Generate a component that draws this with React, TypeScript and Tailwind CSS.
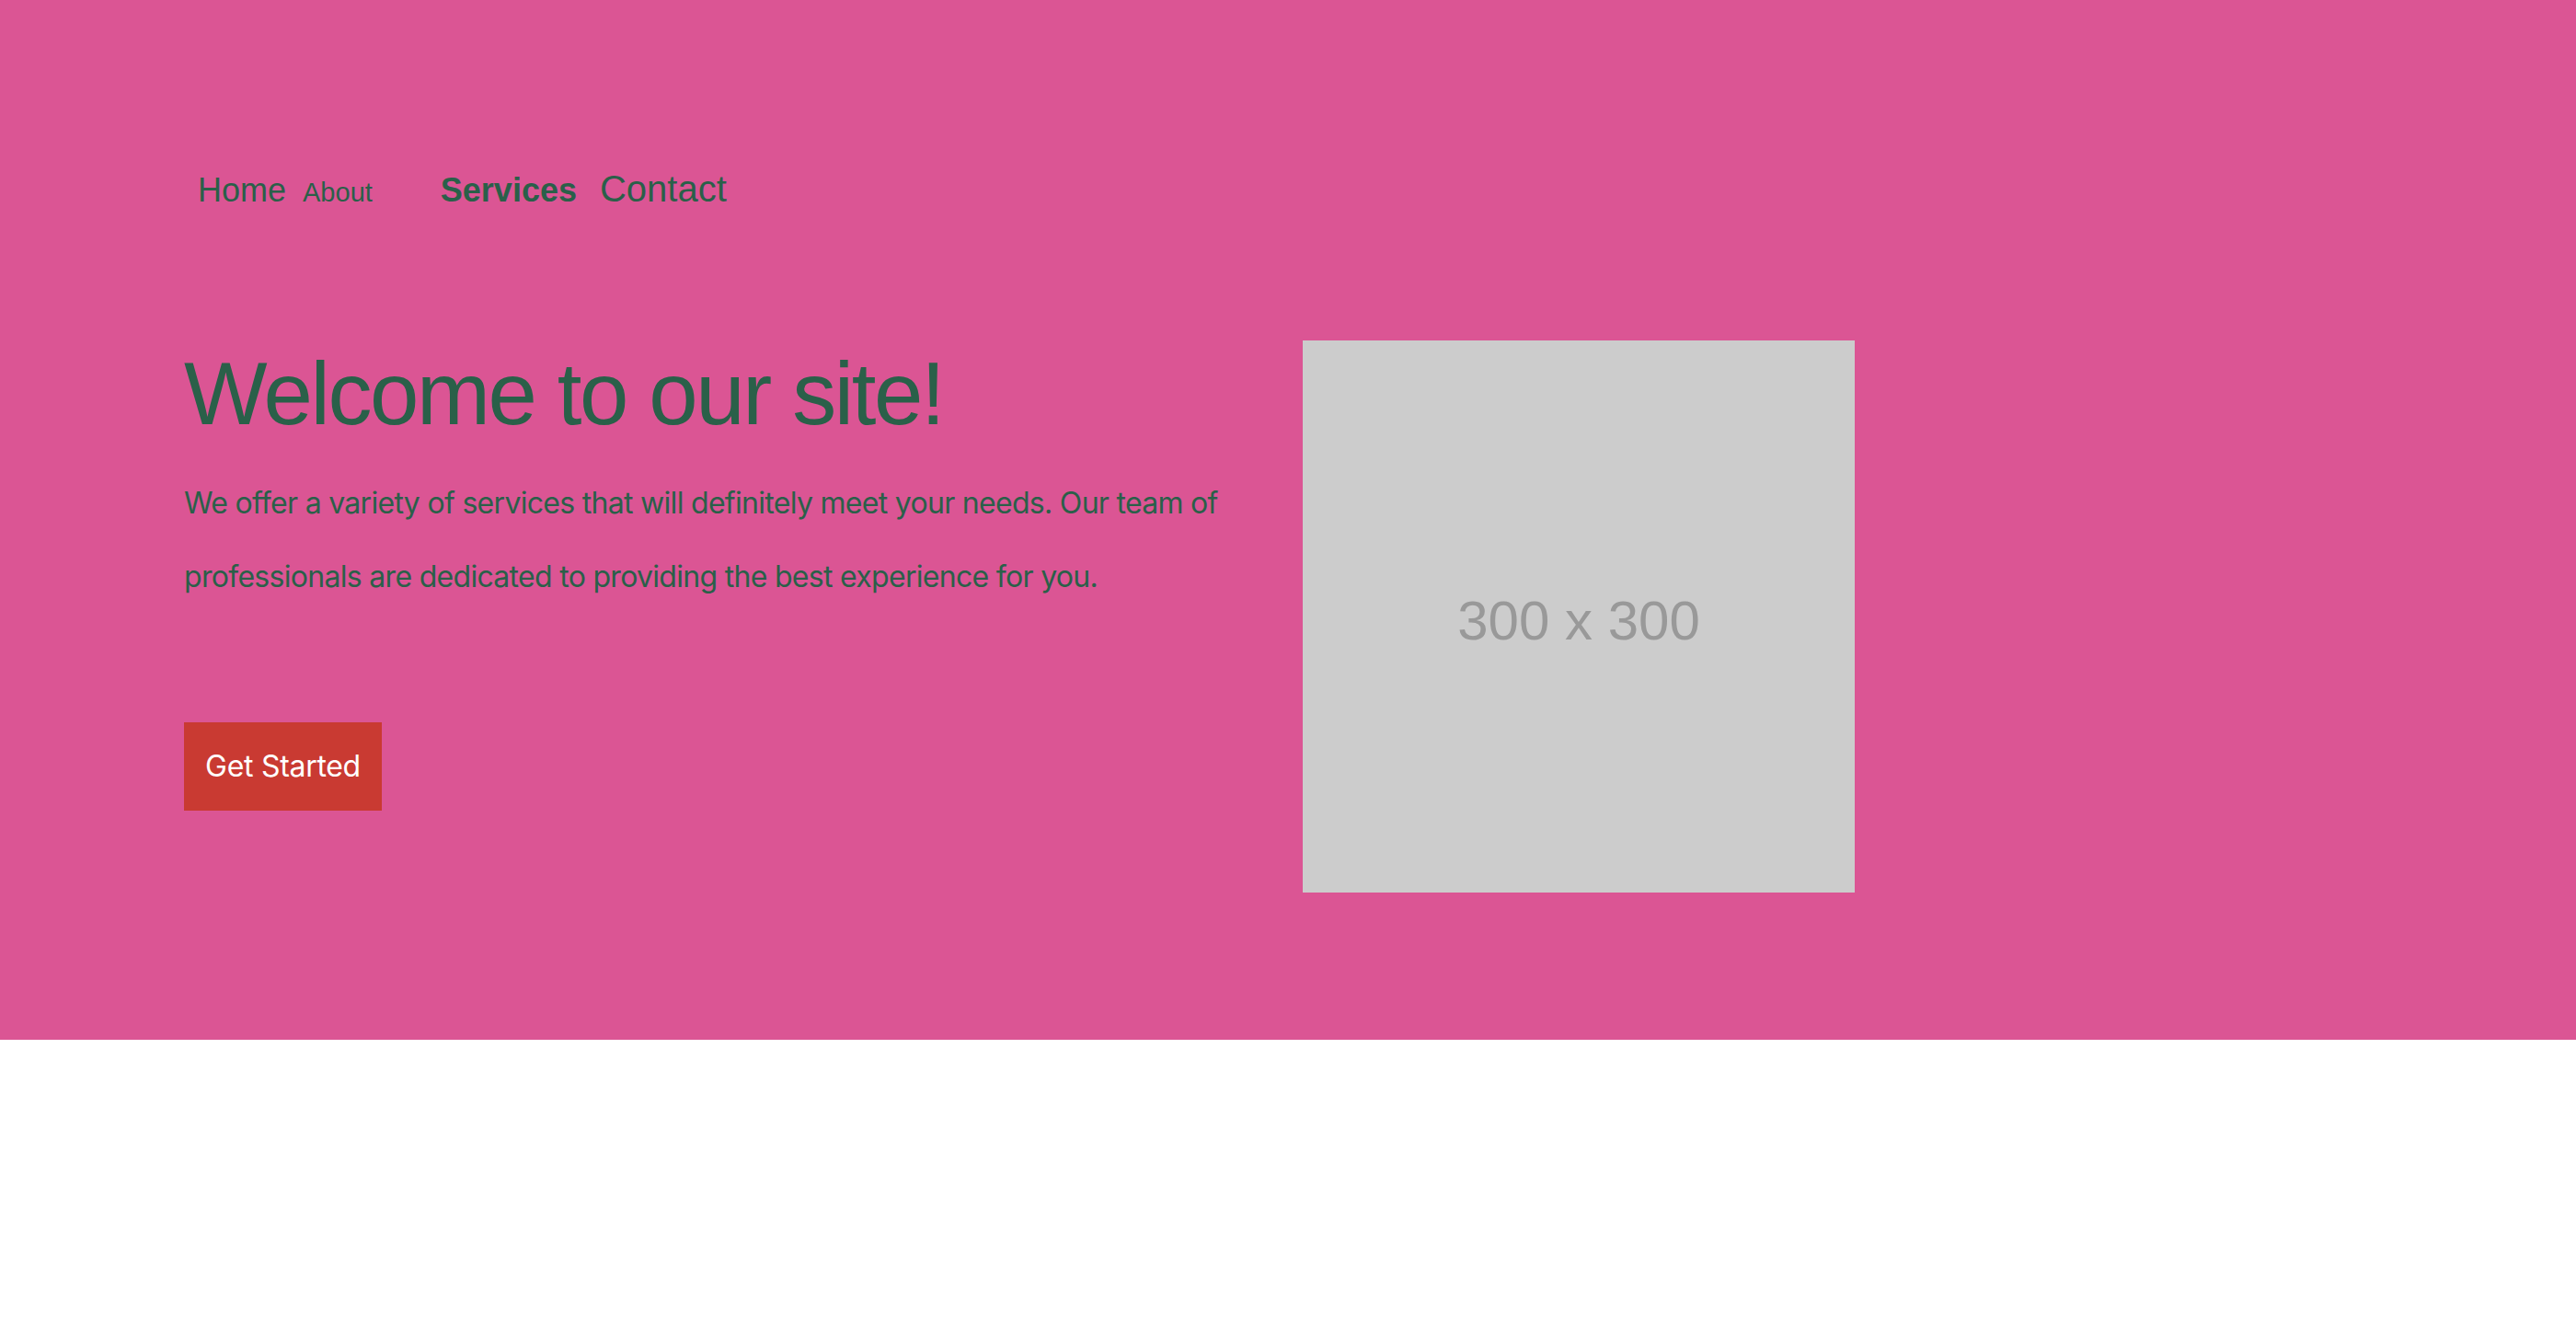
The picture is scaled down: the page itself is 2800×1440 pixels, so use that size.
export default function App() {
  return (
    <div className="min-h-[1440px] bg-white">
      <section className="h-[1130px] bg-[#db5594] px-[200px] text-[#2a6049]">
        {/* Nav */}
        <nav className="flex items-baseline pt-[185px] leading-none font-['Liberation_Sans',Arial,sans-serif]">
          <a href="#" className="ml-[15px] text-[36px]">Home</a>
          <a href="#" className="ml-[18px] text-[29px]">About</a>
          <a href="#" className="ml-[74px] text-[36px] font-bold">Services</a>
          <a href="#" className="ml-[25px] text-[40px]">Contact</a>
        </nav>

        {/* Hero */}
        <div className="mt-[145px] flex items-start gap-[36px]">
          <div className="w-[1180px] pt-[10px]">
            <h1 className="text-[96px] leading-none tracking-[-2.4px] font-['Liberation_Sans',Arial,sans-serif]">
              Welcome to our site!
            </h1>
            <p className="mt-[31px] text-[32px] leading-[80px] tracking-[-0.7px] font-['Inter','Noto_Sans',sans-serif]">
              We offer a variety of services that will definitely meet your needs. Our team of professionals are dedicated to providing the best experience for you.
            </p>
            <button className="mt-[118px] flex h-[96px] w-[215px] items-center justify-center bg-[#c93a32] text-[32px] tracking-[-0.3px] text-white font-['Inter','Noto_Sans',sans-serif]">
              Get Started
            </button>
          </div>
          <div className="flex h-[600px] w-[600px] shrink-0 items-center justify-center bg-[#cccccc] pt-[10px] text-[60px] text-[#999999] font-['Liberation_Sans',Arial,sans-serif]">
            300 x 300
          </div>
        </div>
      </section>
    </div>
  )
}
